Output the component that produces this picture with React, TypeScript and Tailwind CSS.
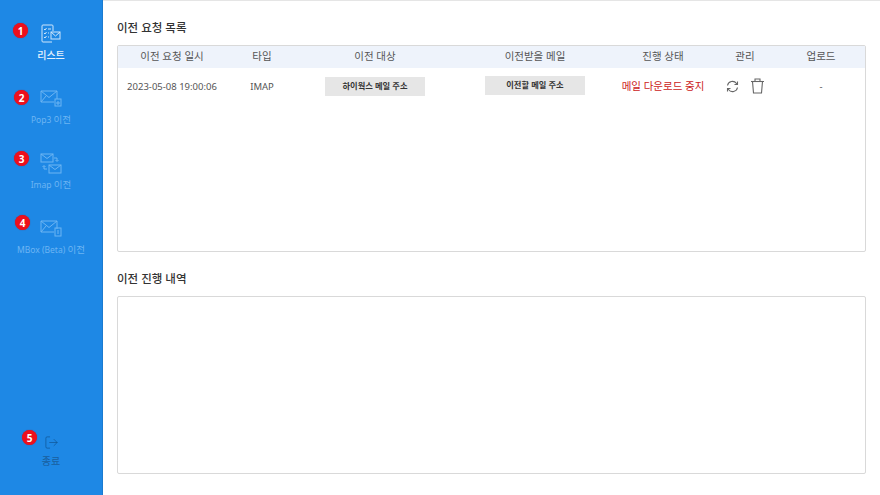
import { LogOut } from 'lucide-react';

const fontFamily = 'font-["Noto_Sans","Noto_Sans_CJK_KR",sans-serif]';

function Badge({ n, className }: { n: number; className: string }) {
  return (
    <span className={`absolute flex h-[15px] w-[15px] items-center justify-center rounded-full bg-[#ee0f1c] text-[10px] font-bold leading-none text-white shadow-[0_0_1px_#8a2a4a] ${className}`}>
      {n}
    </span>
  );
}

function ListIcon() {
  return (
    <svg width="22" height="20" viewBox="0 0 22 20" fill="none" stroke="#cfe6fb" strokeWidth="1">
      <path d="M12 1H3a1 1 0 0 0-1 1v15a1 1 0 0 0 1 1h9" />
      <path d="M12 1a1 1 0 0 1 1 1v5" />
      <path d="M4 5l1 1 1.500-2M4 9l1 1 1.500-2M4 13l1 1 1.500-2M8 5h3M8 9h1M8 13h1" />
      <rect x="11" y="8" width="9" height="7" />
      <path d="M11 8l4.500 4L20 8" />
    </svg>
  );
}

function Pop3Icon() {
  return (
    <svg width="22" height="17" viewBox="0 0 22 17" fill="none" stroke="#6db5f3" strokeWidth="1">
      <path d="M14 12H1V1h16v8" />
      <path d="M1 1l8 6.500L17 1M1 12l5-6" />
      <rect x="15" y="9" width="6" height="7" />
      <path d="M17 12h2v2h-2z" />
    </svg>
  );
}

function ImapIcon() {
  return (
    <svg width="22" height="21" viewBox="0 0 22 21" fill="none" stroke="#6db5f3" strokeWidth="1">
      <rect x="1" y="1" width="12" height="8" />
      <path d="M1 1l6 4.500L13 1" />
      <rect x="9" y="12" width="12" height="8" />
      <path d="M9 12l6 4.500L21 12" />
      <path d="M14 5h3v3M15.500 7l1.500 1.500 1.500-1.500M7 16H4v-3M2.500 14L4 12.500 5.500 14" />
    </svg>
  );
}

function MboxIcon() {
  return (
    <svg width="22" height="17" viewBox="0 0 22 17" fill="none" stroke="#6db5f3" strokeWidth="1">
      <path d="M14 12H1V1h16v8" />
      <path d="M1 1l8 6.500L17 1M1 12l5-6" />
      <rect x="15" y="8" width="6" height="8" />
      <path d="M18 10v4" />
    </svg>
  );
}

function RefreshIcon() {
  return (
    <svg width="13" height="13" viewBox="0 0 13 13" fill="none" stroke="#666" strokeWidth="1.100">
      <path d="M1.500 5.500A5 5 0 0 1 10.500 3.500L11.500 4.500" />
      <path d="M11.500 1.500v3h-3" />
      <path d="M11.500 7.500A5 5 0 0 1 2.500 9.500L1.500 8.500" />
      <path d="M1.500 11.500v-3h3" />
    </svg>
  );
}

function TrashIcon() {
  return (
    <svg width="15" height="16" viewBox="0 0 15 16" fill="none" stroke="#666" strokeWidth="1.100">
      <path d="M1 3.500h13" />
      <path d="M5 3.500V1h5v2.500" />
      <path d="M2.500 3.500l1 11.500h8l1-11.500" />
    </svg>
  );
}

function NavItem({ icon, latin, label, active }: { icon: React.ReactNode; latin?: string; label: string; active?: boolean }) {
  return (
    <div className="flex h-[65px] flex-col items-center">
      <div className="flex h-[27px] items-center justify-center">{icon}</div>
      <span className={`mt-[2px] whitespace-nowrap text-[9.500px] leading-[12px] ${active ? 'text-[10px] font-medium text-[#e6f2fd]' : 'text-[#6db5f3]'}`}>
        {latin && <span className="text-[8.500px]">{latin} </span>}
        {label}
      </span>
    </div>
  );
}

function MailButton({ label, className }: { label: string; className?: string }) {
  return (
    <div className={`flex h-[19px] w-[100px] items-center justify-center bg-[#e6e6e6] text-[8.250px] font-bold text-[#333] ${className ?? ''}`}>
      {label}
    </div>
  );
}

const columns = 'grid grid-cols-[108px_72px_154px_166px_90px_74px_78px]';

export default function App() {
  return (
    <div className={`flex h-[495px] w-[880px] overflow-hidden bg-white ${fontFamily}`}>
      {/* 사이드바 */}
      <aside className="relative flex w-[103px] flex-col border-r border-[#1a7bd0] bg-[#1e88e5] pt-[20px]">
        <NavItem icon={<ListIcon />} label="리스트" active />
        <NavItem icon={<Pop3Icon />} latin="Pop3" label="이전" />
        <NavItem icon={<ImapIcon />} latin="Imap" label="이전" />
        <NavItem icon={<MboxIcon />} latin="MBox (Beta)" label="이전" />
        <div className="mt-auto mb-[28px] flex flex-col items-center">
          <LogOut size={15} strokeWidth={1} color="#0f4f8a" />
          <span className="mt-[5px] text-[10px] leading-[12px] text-[#1a5f9f]">종료</span>
        </div>
        <Badge n={1} className="left-[13px] top-[23px]" />
        <Badge n={2} className="left-[14px] top-[90px]" />
        <Badge n={3} className="left-[14px] top-[151px]" />
        <Badge n={4} className="left-[15px] top-[215px]" />
        <Badge n={5} className="left-[22px] top-[430px]" />
      </aside>

      {/* 본문 */}
      <main className="flex flex-1 flex-col border-t border-[#e5e5e5] pl-[14px] pr-[14px]">
        <h2 className="mt-[20px] text-[11.500px] font-medium leading-[14px] text-[#333]">이전 요청 목록</h2>
        <section className="mt-[10px] h-[207px] rounded-[2px] border border-[#d9d9d9]">
          <div className={`${columns} h-[22px] items-center bg-[#eef3fb] text-center text-[10.500px] text-[#555]`}>
            <span>이전 요청 일시</span>
            <span>타입</span>
            <span>이전 대상</span>
            <span>이전받을 메일</span>
            <span>진행 상태</span>
            <span>관리</span>
            <span>업로드</span>
          </div>
          <div className={`${columns} mt-[8px] h-[20px] items-center text-center text-[9.500px] text-[#555]`}>
            <span className="whitespace-nowrap pt-[2px]">2023-05-08 19:00:06</span>
            <span className="pt-[2px]">IMAP</span>
            <div className="flex justify-center">
              <MailButton label="하이웍스 메일 주소" />
            </div>
            <div className="flex justify-center">
              <MailButton label="이전할 메일 주소" className="-translate-y-px" />
            </div>
            <span className="whitespace-nowrap pt-[2px] text-[10.500px] text-[#cc2222]">메일 다운로드 중지</span>
            <div className="flex items-center justify-center gap-[11px]">
              <RefreshIcon />
              <TrashIcon />
            </div>
            <span className="pt-[2px]">-</span>
          </div>
        </section>
        <h2 className="mt-[20px] text-[11.500px] font-medium leading-[14px] text-[#333]">이전 진행 내역</h2>
        <section className="mt-[10px] h-[178px] rounded-[2px] border border-[#d9d9d9]" />
      </main>
    </div>
  );
}
